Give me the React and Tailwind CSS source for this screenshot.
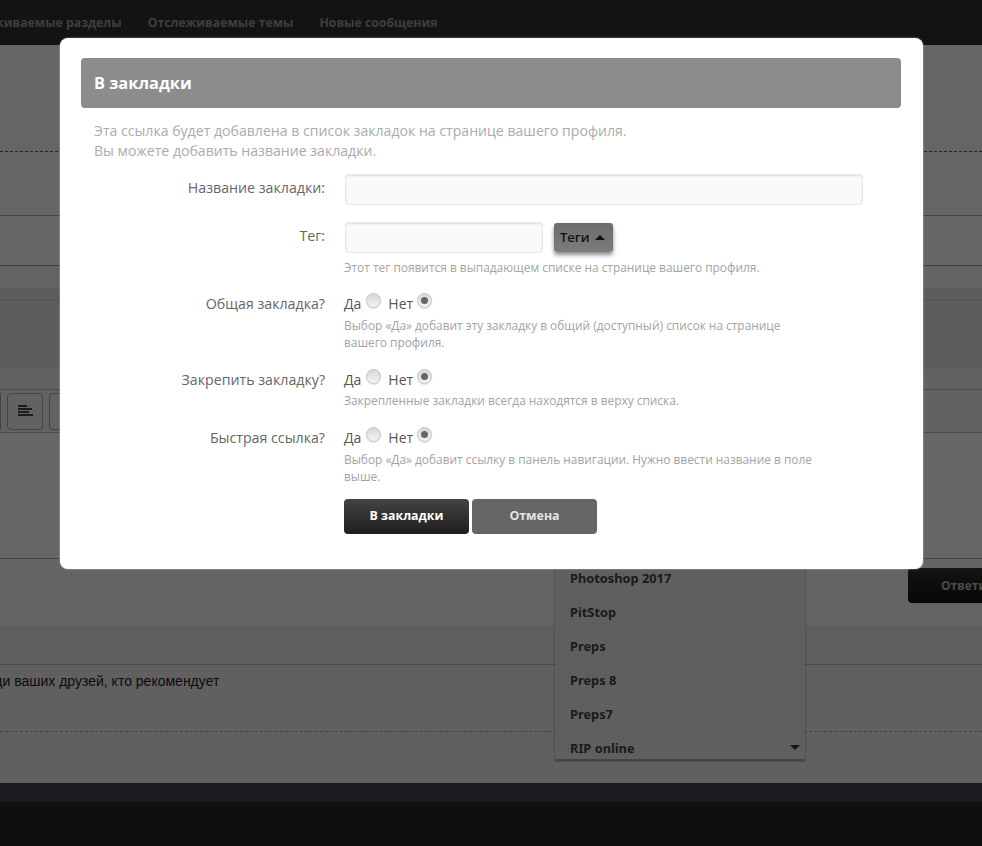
const dropdownItems = ["Photoshop 2017", "PitStop", "Preps", "Preps 8", "Preps7", "RIP online"];

const Radio = ({ checked }) => (
  <span className="mt-[-8px] flex h-[15px] w-[15px] items-center justify-center rounded-full border border-[#c4c4c4] bg-gradient-to-b from-[#d8d8d8] to-[#f4f4f4] shadow-[0_1px_1px_rgba(0,0,0,0.12)]">
    {checked && <span className="h-[7px] w-[7px] rounded-full bg-[#666]" />}
  </span>
);

const FormRow = ({ label, labelClass, children, className }) => (
  <div className={`flex ${className}`}>
    <div className={`w-[244px] shrink-0 text-right text-[14.2px] leading-[20px] text-[#666] ${labelClass || ""}`}>{label}</div>
    <div className="ml-[19px] min-w-0 flex-1">{children}</div>
  </div>
);

const YesNo = () => (
  <div className="flex h-[20px] items-center text-[14px] leading-[20px] text-[#555]">
    <span>Да</span>
    <span className="ml-[5px]"><Radio /></span>
    <span className="ml-[7px]">Нет</span>
    <span className="ml-[4px]"><Radio checked /></span>
  </div>
);

const Hint = ({ children, className }) => (
  <p className={`w-[480px] text-[11.9px] leading-[17px] text-[#a3a3a3] ${className || ""}`}>{children}</p>
);

const Page = () => (
  <div className="flex h-[846px] flex-col bg-white font-['Open_Sans',sans-serif]">
    <div className="flex h-[45px] shrink-0 items-center gap-[26px] bg-[#303030] pt-[1px] text-[12.25px] font-bold whitespace-nowrap text-[#9c9c9c]">
      <span className="-ml-[45px]">Отслеживаемые разделы</span>
      <span>Отслеживаемые темы</span>
      <span>Новые сообщения</span>
    </div>
    <div className="h-[107px] shrink-0 border-b border-dashed border-[#555] bg-[#fdfdfd]" />
    <div className="h-[64px] shrink-0 border-b border-[#aaa] bg-[#fdfdfd]" />
    <div className="h-[50px] shrink-0 border-b border-[#999] bg-white" />
    <div className="h-[22px] shrink-0 bg-[#f8f8f8]" />
    <div className="h-[13px] shrink-0 border-b border-[#ccc] bg-[#e6e6e6]" />
    <div className="h-[68px] shrink-0 bg-[#e8e8e8]" />
    <div className="h-[21px] shrink-0 border-b border-[#bbb] bg-[#f4f4f4]" />
    <div className="flex h-[43px] shrink-0 items-center gap-[6px] border-b border-[#bbb] bg-[#f4f4f4]">
      <div className="h-[37px] w-[1px] bg-[#aaa]" />
      <div className="flex h-[37px] w-[36px] items-center justify-center rounded border border-[#aaa]">
        <svg width="16" height="14" viewBox="0 0 16 14">
          <path d="M1 1h9v2H1zM1 4h14v2H1zM1 7h11v2H1zM1 10h15v2H1z" fill="#444" />
        </svg>
      </div>
      <div className="h-[37px] w-[36px] rounded border border-[#aaa]" />
    </div>
    <div className="h-[126px] shrink-0 border-b border-[#aaa] bg-white" />
    <div className="flex h-[67px] shrink-0 items-start justify-end bg-[#fbfbfb] pt-[9px]">
      <div className="flex h-[35px] w-[74px] items-center overflow-hidden rounded-l bg-gradient-to-b from-[#333] to-[#111] pl-[33px] text-[12px] font-bold whitespace-nowrap text-[#bbb]">
        Ответить
      </div>
    </div>
    <div className="h-[39px] shrink-0 border-b border-[#bbb] bg-[#ececec]" />
    <div className="h-[67px] shrink-0 border-b border-dashed border-[#aaa] bg-[#f0f0f0]">
      <p className="-ml-[159px] pt-[7px] font-['Liberation_Sans',sans-serif] text-[14px] leading-[18px] whitespace-nowrap text-[#222]">
        Посмотрите, нет ли среди ваших друзей, кто рекомендует
      </p>
    </div>
    <div className="h-[51px] shrink-0 bg-[#f0f0f0]" />
    <div className="h-[19px] shrink-0 bg-[#464850]" />
    <div className="flex-1 bg-[#262626]" />
  </div>
);

const Dropdown = () => (
  <div className="absolute top-[562px] left-[555px] h-[199px] w-[250px] overflow-hidden border-b-2 border-[#aaa] bg-[#eeeeee] shadow-[0_0_2px_rgba(0,0,0,0.4)]">
    {dropdownItems.map((item, i) => (
      <div key={item} className="relative flex h-[34px] items-center pl-[15px] text-[12.8px] font-bold text-[#444]">
        {item}
        {i === dropdownItems.length - 1 && (
          <span className="absolute top-[13px] right-[5px] h-0 w-0 border-x-[5px] border-t-[5px] border-x-transparent border-t-[#333]" />
        )}
      </div>
    ))}
  </div>
);

const Modal = () => (
  <div className="absolute top-[38px] left-[60px] h-[531px] w-[863px] rounded-[8px] bg-white px-[21px] pt-[20px] font-['Open_Sans',sans-serif] shadow-[0_0_2px_rgba(255,255,255,0.6)]">
    <div className="flex h-[50px] w-[820px] items-center rounded-[4px] bg-[#8c8c8c] pl-[13px] text-[16.4px] font-bold text-white">
      В закладки
    </div>
    <div className="mt-[13px] pl-[13px] text-[14.1px] leading-[20px] text-[#ababab]">
      <p>Эта ссылка будет добавлена в список закладок на странице вашего профиля.</p>
      <p>Вы можете добавить название закладки.</p>
    </div>
    <FormRow label="Название закладки:" labelClass="pt-[7px]" className="mt-[10px] items-start">
      <div className="mt-[3px] ml-[1px] h-[31px] w-[518px] rounded-[3px] border border-[#e8e8e8] bg-[#fafafa] shadow-[inset_0_1px_2px_rgba(0,0,0,0.12)]" />
    </FormRow>
    <FormRow label="Тег:" labelClass="pt-[4px]" className="mt-[17px]">
      <div className="ml-[1px] flex items-start">
        <div className="h-[31px] w-[198px] rounded-[3px] border border-[#e8e8e8] bg-[#fafafa] shadow-[inset_0_1px_2px_rgba(0,0,0,0.12)]" />
        <button className="mt-[1px] ml-[11px] flex h-[29px] w-[59px] items-center rounded-[3px] bg-gradient-to-b from-[#6c6c6c] to-[#7c7c7c] pl-[6px] text-[13px] font-semibold text-[#111] shadow-[0_3px_4px_rgba(0,0,0,0.45)]">
          Теги
          <span className="ml-[5px] h-0 w-0 border-x-[5px] border-b-[5px] border-x-transparent border-b-[#111]" />
        </button>
      </div>
      <Hint className="mt-[6px]">Этот тег появится в выпадающем списке на странице вашего профиля.</Hint>
    </FormRow>
    <FormRow label="Общая закладка?" className="mt-[18px]">
      <YesNo />
      <Hint className="mt-[3px]">Выбор «Да» добавит эту закладку в общий (доступный) список на странице вашего профиля.</Hint>
    </FormRow>
    <FormRow label="Закрепить закладку?" className="mt-[19px]">
      <YesNo />
      <Hint className="mt-[2px]">Закрепленные закладки всегда находятся в верху списка.</Hint>
    </FormRow>
    <FormRow label="Быстрая ссылка?" className="mt-[19px]">
      <YesNo />
      <Hint className="mt-[3px]">Выбор «Да» добавит ссылку в панель навигации. Нужно ввести название в поле выше.</Hint>
    </FormRow>
    <div className="mt-[14px] ml-[263px] flex gap-[3px]">
      <button className="h-[35px] w-[125px] rounded-[4px] bg-gradient-to-b from-[#444] to-[#1e1e1e] text-[12.4px] font-bold text-white">
        В закладки
      </button>
      <button className="h-[35px] w-[125px] rounded-[4px] bg-[#666] text-[12.4px] font-bold text-[#e4e4e4]">
        Отмена
      </button>
    </div>
  </div>
);

export default function App() {
  return (
    <div className="relative h-[846px] overflow-hidden">
      <Page />
      <Dropdown />
      <div className="absolute inset-0 bg-black/60" />
      <Modal />
    </div>
  );
}
